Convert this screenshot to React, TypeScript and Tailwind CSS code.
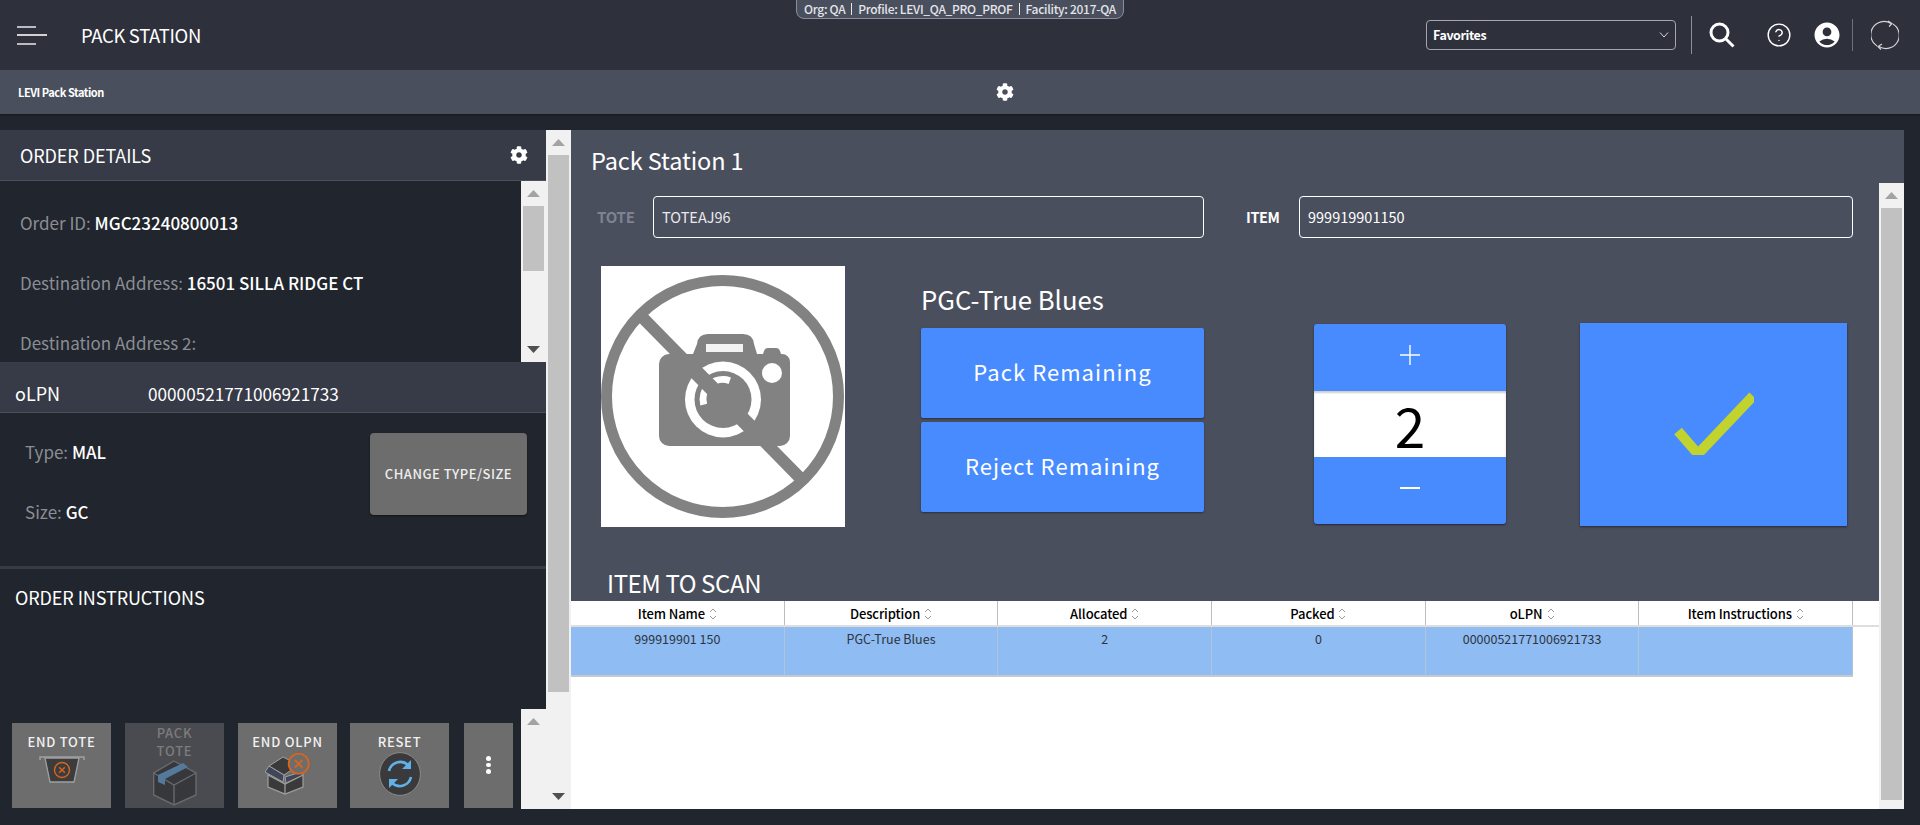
import { FaCog } from "react-icons/fa";
import { MdAccountCircle } from "react-icons/md";
import { CircleHelp } from "lucide-react";

const columns = ["Item Name", "Description", "Allocated", "Packed", "oLPN", "Item Instructions"];
const cells = ["999919901 150", "PGC-True Blues", "2", "0", "00000521771006921733", ""];

function SortIcon() {
  return (
    <svg width="8" height="14" viewBox="0 0 8 14" className="ml-[4px] shrink-0" fill="none" stroke="#9a9a9a" strokeWidth="1">
      <path d="M1 5l3-3 3 3M1 9l3 3 3-3" />
    </svg>
  );
}

function Scrollbar({ thumb, hideDown }: { thumb: string; hideDown?: boolean }) {
  return (
    <div className="w-[25px] shrink-0 flex flex-col items-center bg-[#f1f1f1]">
      <div className="h-[25px] w-full flex items-center justify-center shrink-0">
        <svg width="13" height="7" viewBox="0 0 13 7"><path d="M6.5 0L13 7H0z" fill="#a3a3a3" /></svg>
      </div>
      <div className={`w-[21px] bg-[#c1c1c1] shrink-0 ${thumb}`}></div>
      <div className="flex-1"></div>
      {!hideDown && (
        <div className="h-[25px] w-full flex items-center justify-center shrink-0">
          <svg width="13" height="7" viewBox="0 0 13 7"><path d="M6.5 7L13 0H0z" fill="#505050" /></svg>
        </div>
      )}
    </div>
  );
}

function NoImage() {
  return (
    <svg width="244" height="261" viewBox="0 0 244 261" className="bg-white shrink-0">
      <circle cx="121.5" cy="130.5" r="116" fill="none" stroke="#828282" strokeWidth="11" />
      <path d="M41 51L203 216" stroke="#828282" strokeWidth="12" />
      <path d="M58 98a10 10 0 0 1 10-10h24l4-10q1-10 11-10h35q10 0 11 10l3 10h6l1-3q1-3 4-3h8q3 0 4 3l1 3h1a8 8 0 0 1 8 8v74a10 10 0 0 1-10 10H68a10 10 0 0 1-10-10z" fill="#828282" />
      <rect x="105" y="78" width="37" height="8" fill="#f3f3f3" />
      <circle cx="171" cy="107" r="10" fill="#fff" />
      <circle cx="122" cy="133.5" r="38" fill="#fff" />
      <circle cx="122" cy="133.5" r="28.5" fill="#828282" />
      <path d="M102.7 138.7A20 20 0 0 1 128.8 114.7" fill="none" stroke="#fff" strokeWidth="7" />
      <path d="M84 95L160 172" stroke="#828282" strokeWidth="15" />
    </svg>
  );
}

function XCircle({ cx, cy, r, w = 1.4 }: { cx: number; cy: number; r: number; w?: number }) {
  const d = r * 0.38;
  return (
    <g fill="none" stroke="#d8651f" strokeWidth={w}>
      <circle cx={cx} cy={cy} r={r} />
      <path d={`M${cx - d} ${cy - d}L${cx + d} ${cy + d}M${cx + d} ${cy - d}L${cx - d} ${cy + d}`} />
    </g>
  );
}

function ToteIcon() {
  return (
    <svg width="46" height="28" viewBox="0 0 46 28" className="mt-[5px]">
      <path d="M1 4V1h44v3" fill="none" stroke="#a0a0a0" strokeWidth="1.5" />
      <path d="M6 2l5 24h24l5-24z" fill="#3c3c3c" stroke="#a0a0a0" strokeWidth="1.3" />
      <XCircle cx={23} cy={14} r={7.5} />
    </svg>
  );
}

function PackedBoxIcon() {
  return (
    <svg width="44" height="46" viewBox="0 0 44 46">
      <path d="M21 1L43 13v22L21 45 0.7 35V13z" fill="#37383c" stroke="#6a6a6c" strokeWidth="1.4" />
      <path d="M0.7 13L21 25l22-12M21 25v20" fill="none" stroke="#6a6a6c" strokeWidth="1.4" />
      <path d="M30 3l5 4-23 12v6l-7-3v-7z" fill="#54799b" />
    </svg>
  );
}

function OpenBoxIcon() {
  return (
    <svg width="46" height="44" viewBox="0 -4 46 44">
      <path d="M4 9l14-9 16 8-15 10z" fill="#3a3a3c" stroke="#a0a0a0" strokeWidth="1" />
      <path d="M3 18l17 9 18-9v12l-18 7-17-7z" fill="#3a3a3c" stroke="#a0a0a0" strokeWidth="1.2" />
      <path d="M20 27v10" stroke="#a0a0a0" strokeWidth="1.2" />
      <path d="M0 15l4-6 15 9-1 7z" fill="#3f4658" stroke="#a0a0a0" strokeWidth="1" />
      <path d="M20 20l16-5 2 3-17 8z" fill="#3f4658" stroke="#a0a0a0" strokeWidth="1" />
      <circle cx="33.7" cy="6.7" r="10" fill="#6d6d6d" />
      <XCircle cx={33.7} cy={6.7} r={10} w={1.8} />
    </svg>
  );
}

function ResetIcon() {
  return (
    <svg width="42" height="44" viewBox="0 0 42 44" className="mt-[1px]">
      <ellipse cx="21" cy="22" rx="20.4" ry="21.4" fill="#3a3a3c" stroke="#8a8a8a" strokeWidth="1" />
      <g fill="none" stroke="#62b0e8" strokeWidth="2.6">
        <path d="M10 19a11.5 11.5 0 0 1 19-6" />
        <path d="M32 25a11.5 11.5 0 0 1-19 6" />
      </g>
      <path d="M32 8v9h-9z M10 36v-9h9z" fill="#62b0e8" />
    </svg>
  );
}

function ActionButton({ label, disabled, className = "", children }: { label: string; disabled?: boolean; className?: string; children?: React.ReactNode }) {
  return (
    <div
      className={`h-[85px] w-[99px] flex flex-col items-center text-[13px] font-medium tracking-[0.75px] text-center ${
        disabled ? "bg-[#4a4b50] text-[#7c7c7c] pt-0" : "bg-[#6d6d6d] text-[#f1f1f1] pt-[10px]"
      } ${className}`}
    >
      <span className={disabled ? "leading-[18px] w-[50px] mt-[1px]" : "leading-[18px]"}>{label}</span>
      {children}
    </div>
  );
}

function DetailRow({ label, value }: { label: string; value: string }) {
  return (
    <p className="h-[60px] flex items-center text-[17px] whitespace-pre">
      <span className="text-[#8b8e95]">{label} </span>
      <span className="text-white font-medium">{value}</span>
    </p>
  );
}

export default function App() {
  return (
    <div className="w-[1920px] h-[825px] overflow-hidden flex flex-col bg-[#21252d] text-white font-['Noto_Sans_CJK_SC','Liberation_Sans',sans-serif]">
      <header className="relative h-[70px] shrink-0 bg-[#2e303c] flex items-center pl-[17px] pr-[21px]">
        <div className="w-[30px] flex flex-col gap-[6.5px]">
          <span className="block w-[19px] h-[2px] bg-[#b9bbc0]"></span>
          <span className="block w-[30px] h-[2px] bg-[#d0d1d4]"></span>
          <span className="block w-[19px] h-[2px] bg-[#b9bbc0]"></span>
        </div>
        <h1 className="ml-[34px] pt-[2px] text-[18.5px] tracking-[-0.35px]">PACK STATION</h1>

        <div className="absolute left-[796px] top-[-1px] w-[328px] h-[20px] flex items-center justify-center gap-[6px] bg-[#4a4f5e] border border-[#8b8e9a] rounded-b-[8px] text-[12px] font-medium tracking-[-0.3px] text-[#e4e5e9] whitespace-nowrap">
          <span>Org: QA</span>
          <span className="w-px h-[12px] bg-[#e4e5e9]"></span>
          <span>Profile: LEVI_QA_PRO_PROF</span>
          <span className="w-px h-[12px] bg-[#e4e5e9]"></span>
          <span>Facility: 2017-QA</span>
        </div>

        <div className="ml-auto w-[250px] h-[30px] border border-[#a5a6ab] rounded-[4px] flex items-center justify-between px-[6px] text-[12.5px] font-bold tracking-[-0.4px]">
          Favorites
          <svg width="10" height="6" viewBox="0 0 10 6" fill="none" stroke="#d8d8d8" strokeWidth="1"><path d="M1 .5l4 4.5 4-4.5" /></svg>
        </div>
        <div className="w-px h-[38px] bg-[#8d8e94] ml-[15px]"></div>
        <svg width="26" height="26" viewBox="0 0 26 26" fill="none" stroke="#fff" className="ml-[17px]">
          <circle cx="10.5" cy="10.5" r="8.5" strokeWidth="3" />
          <path d="M16.5 16.5l8 8" strokeWidth="3" />
        </svg>
        <CircleHelp size={26} strokeWidth={1.3} color="#fff" className="ml-[31px]" />
        <MdAccountCircle size={30} color="#fff" className="ml-[20px]" />
        <div className="w-px h-[32px] bg-[#6f7078] ml-[10px]"></div>
        <svg width="28" height="30" viewBox="0 0 28 30" fill="none" stroke="#d6d6d8" strokeWidth="1.2" className="ml-[18px]">
          <path d="M6 26A12.5 12.5 0 0 1 20 3.5" />
          <path d="M22 4A12.5 12.5 0 0 1 8 26.5" />
          <path d="M17 1l4 2.5-3 3M11 24l-4 2.5 3 3" />
        </svg>
      </header>

      <div className="h-[44px] shrink-0 bg-[#4a4f5e] flex items-center pl-[18px] shadow-[0_1px_2px_rgba(0,0,0,0.4)]">
        <span className="w-[978px] text-[11px] font-bold tracking-[-0.45px]">LEVI Pack Station</span>
        <FaCog size={18} color="#fff" />
      </div>

      <main className="mt-[16px] h-[679px] shrink-0 flex pr-[16px]">
        {/* left column */}
        <section className="w-[546px] shrink-0 flex flex-col">
          <div className="h-[51px] shrink-0 bg-[#373a47] border-b border-[#4c4f5a] flex items-center justify-between pl-[20px] pr-[18px]">
            <h2 className="text-[18px] tracking-[-0.1px]">ORDER DETAILS</h2>
            <FaCog size={18} color="#fff" />
          </div>
          <div className="h-[182px] shrink-0 flex border-b border-[#3a3d48]">
            <div className="flex-1 overflow-hidden pl-[20px] pt-[12px]">
              <DetailRow label="Order ID:" value="MGC23240800013" />
              <DetailRow label="Destination Address:" value="16501 SILLA RIDGE CT" />
              <DetailRow label="Destination Address 2:" value="" />
            </div>
            <Scrollbar thumb="h-[65px]" />
          </div>
          <div className="h-[50px] shrink-0 bg-[#373a47] border-b border-[#4c4f5a] flex items-center pl-[15px] pt-[12px] text-[18px]">
            <span className="w-[133px]">oLPN</span>
            <span className="text-[17.2px]">00000521771006921733</span>
          </div>
          <div className="h-[156px] shrink-0 border-b-[3px] border-[#373a47] flex justify-between pl-[25px] pr-[19px]">
            <div className="text-[17px]">
              <p className="h-[60px] mt-[9px] flex items-center whitespace-pre"><span className="text-[#8b8e95]">Type: </span><span className="font-medium">MAL</span></p>
              <p className="h-[60px] flex items-center whitespace-pre"><span className="text-[#8b8e95]">Size: </span><span className="font-medium">GC</span></p>
            </div>
            <button className="mt-[20px] w-[157px] h-[82px] rounded-[4px] bg-[#6d6d6d] text-[#eeeeee] text-[13px] font-medium tracking-[0.5px] shadow-[0_1px_2px_rgba(0,0,0,0.5)]">
              CHANGE TYPE/SIZE
            </button>
          </div>
          <h2 className="mt-[16px] ml-[15px] text-[18px] leading-[24px] tracking-[-0.1px]">ORDER INSTRUCTIONS</h2>

          <div className="mt-auto h-[100px] shrink-0 flex">
            <div className="flex-1 flex gap-[14px] pl-[12px] pt-[14px]">
              <ActionButton label="END TOTE"><ToteIcon /></ActionButton>
              <ActionButton label="PACK TOTE" disabled><PackedBoxIcon /></ActionButton>
              <ActionButton label="END OLPN"><div className="mt-[2px]"><OpenBoxIcon /></div></ActionButton>
              <ActionButton label="RESET" className="ml-[-1px]"><ResetIcon /></ActionButton>
              <div className="ml-px w-[49px] h-[85px] bg-[#6d6d6d] flex flex-col items-center justify-center gap-[2px] pb-[1px]">
                <span className="w-[4.5px] h-[4.5px] rounded-full bg-white"></span>
                <span className="w-[4.5px] h-[4.5px] rounded-full bg-white"></span>
                <span className="w-[4.5px] h-[4.5px] rounded-full bg-white"></span>
              </div>
            </div>
            <div className="w-[25px] bg-[#f1f1f1] flex justify-center pt-[9px]">
              <svg width="13" height="7" viewBox="0 0 13 7"><path d="M6.5 0L13 7H0z" fill="#a3a3a3" /></svg>
            </div>
          </div>
        </section>

        <Scrollbar thumb="h-[537px]" />

        {/* pack panel */}
        <section className="flex-1 flex flex-col bg-[#4a4f5e]">
          <h2 className="h-[53px] shrink-0 pl-[20px] pt-[14px] text-[23.5px] leading-[32px] tracking-[-0.1px]">Pack Station 1</h2>
          <div className="flex-1 flex min-h-0">
            <div className="flex-1 flex flex-col">
              <div className="mt-[13px] h-[42px] flex items-center shrink-0">
                <span className="ml-[26px] w-[56px] text-[15px] font-bold text-[#7f8391] tracking-[-0.2px]">TOTE</span>
                <div className="w-[551px] h-[42px] border border-white rounded-[4px] flex items-center pl-[8px] text-[14.5px] text-[#e9e9ec]">TOTEAJ96</div>
                <span className="ml-[42px] w-[53px] text-[14.5px] font-bold tracking-[-0.4px]">ITEM</span>
                <div className="w-[554px] h-[42px] border border-white rounded-[4px] flex items-center pl-[8px] text-[14.5px]">999919901150</div>
              </div>

              <div className="mt-[28px] h-[261px] flex items-start shrink-0 pl-[30px]">
                <NoImage />
                <div className="ml-[75px] w-[284px] shrink-0">
                  <p className="h-[62px] pt-[15px] text-[25.7px] leading-[36px] pl-px">PGC-True Blues</p>
                  <button className="block w-[283px] ml-px h-[90px] pb-[3px] rounded-[2px] bg-[#478bff] text-[22px] tracking-[1.05px] shadow-[0_1px_2px_rgba(0,0,0,0.4)]">Pack Remaining</button>
                  <button className="block w-[283px] ml-px mt-[4px] h-[90px] pb-[3px] rounded-[2px] bg-[#478bff] text-[22px] tracking-[1.05px] shadow-[0_1px_2px_rgba(0,0,0,0.4)]">Reject Remaining</button>
                </div>
                <div className="ml-[110px] mt-[58px] w-[192px] h-[200px] shrink-0 rounded-[3px] overflow-hidden bg-[#478bff] flex flex-col shadow-[0_1px_2px_rgba(0,0,0,0.5)]">
                  <div className="h-[67px] flex items-center justify-center shrink-0 pb-[5px]">
                    <svg width="20" height="20" viewBox="0 0 20 20" stroke="#fff" strokeWidth="1.4"><path d="M10 0v20M0 10h20" /></svg>
                  </div>
                  <div className="h-[66px] bg-white text-black text-[55px] leading-[66px] text-center shrink-0 shadow-[inset_0_2px_2px_rgba(0,0,0,0.2)]">2</div>
                  <div className="flex-1 flex items-center justify-center pb-[6px]">
                    <span className="block w-[20px] h-[2px] bg-white"></span>
                  </div>
                </div>
                <div className="ml-[74px] mt-[57px] w-[267px] h-[203px] shrink-0 bg-[#478bff] flex items-center justify-center shadow-[0_1px_2px_rgba(0,0,0,0.5)]">
                  <svg width="80" height="64" viewBox="0 0 80 64" className="mt-[-4px]">
                    <path d="M4 40l20 23L79 5" fill="none" stroke="#c2d32e" strokeWidth="10" />
                  </svg>
                </div>
              </div>

              <h3 className="mt-[40px] ml-[36px] h-[34px] text-[24px] leading-[32px] tracking-[-0.4px] shrink-0">ITEM TO SCAN</h3>

              <div className="flex-1 bg-white text-black min-h-0">
                <div className="flex h-[26px] border-b-2 border-[#dedede]">
                  {columns.map((c) => (
                    <div key={c} className="w-[213.7px] shrink-0 border-r border-[#bdbdbd] flex items-center justify-center pt-px text-[13px] font-medium tracking-[-0.1px]">
                      {c}
                      <SortIcon />
                    </div>
                  ))}
                </div>
                <div className="flex h-[50px] w-[1282.2px] bg-[#8fbcf3] border-b-2 border-[#c4c9cf]">
                  {cells.map((c, i) => (
                    <div key={i} className="w-[213.7px] shrink-0 border-r border-[#b4c4d8] pt-[3px] text-center text-[12.5px] leading-[18px] text-[#2d3440]">
                      {c}
                    </div>
                  ))}
                </div>
              </div>
            </div>
            <Scrollbar thumb="h-[592px]" hideDown />
          </div>
        </section>
      </main>
    </div>
  );
}
